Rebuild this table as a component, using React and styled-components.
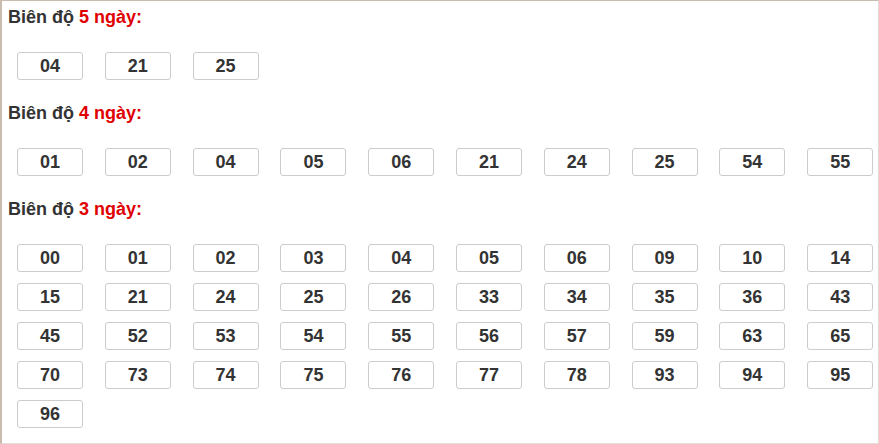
import styled, { createGlobalStyle } from 'styled-components';

const GlobalStyle = createGlobalStyle`
  html, body {
    margin: 0;
    padding: 0;
    background: #fff;
  }
  body {
    font-family: "Liberation Sans", Arial, sans-serif;
  }
`;

const Frame = styled.div`
  box-sizing: border-box;
  width: 879px;
  height: 444px;
  border-left: 2px solid #c9bcae;
  border-top: 1px solid #c9bcae;
  border-right: 1px solid #e2dcd4;
  border-bottom: 1px solid #e2dcd4;
  padding: 6px 0 0 6px;
  overflow: hidden;
`;

const Heading = styled.p`
  margin: 0;
  height: 20px;
  line-height: 20px;
  font-size: 18px;
  font-weight: bold;
  color: #333;
`;

const Red = styled.span`
  color: #e00000;
`;

const Grid = styled.div`
  display: grid;
  grid-template-columns: repeat(10, 66px);
  column-gap: 21.8px;
  row-gap: 11px;
  padding: 25px 0 23px 9px;
`;

const Num = styled.div`
  box-sizing: border-box;
  height: 28px;
  border: 1px solid #cccccc;
  border-radius: 3px;
  display: flex;
  align-items: center;
  justify-content: center;
  font-size: 18px;
  font-weight: bold;
  color: #333;
`;

const groups = [
  { days: 5, nums: ['04', '21', '25'] },
  { days: 4, nums: ['01', '02', '04', '05', '06', '21', '24', '25', '54', '55'] },
  {
    days: 3,
    nums: [
      '00', '01', '02', '03', '04', '05', '06', '09', '10', '14',
      '15', '21', '24', '25', '26', '33', '34', '35', '36', '43',
      '45', '52', '53', '54', '55', '56', '57', '59', '63', '65',
      '70', '73', '74', '75', '76', '77', '78', '93', '94', '95',
      '96',
    ],
  },
];

export default function App() {
  return (
    <>
      <GlobalStyle />
      <Frame>
        {groups.map((g) => (
          <section key={g.days}>
            <Heading>
              Biên độ <Red>{g.days} ngày:</Red>
            </Heading>
            <Grid>
              {g.nums.map((n) => (
                <Num key={n}>{n}</Num>
              ))}
            </Grid>
          </section>
        ))}
      </Frame>
    </>
  );
}
